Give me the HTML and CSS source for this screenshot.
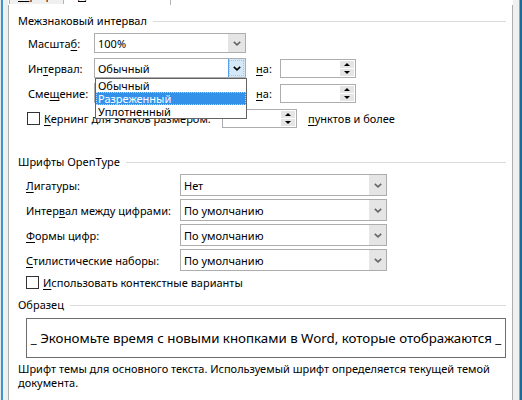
FILE: index.html
```html
<!DOCTYPE html>
<html lang="ru">
<head>
<meta charset="utf-8">
<link rel="stylesheet" href="styles.css">
</head>
<body>
<div class="dialog">
  <div class="tabs">
    <div class="tab"><span class="tab-text"><u>Ш</u>рифт</span></div>
    <div class="tab active"><span class="tab-text"><u>Д</u>ополнительно</span></div>
  </div>
  <div class="panel">
    <div class="group-title"><span>Межзнаковый интервал</span></div>
    <div class="rows">
      <div class="row">
        <span class="lbl lbl-a">Масшта<u>б</u>:</span>
        <div class="combo combo-a"><span class="val">100%</span><span class="btn"><svg width="8" height="5" viewBox="0 0 8 5"><path d="M0.8 0.8 L4 3.8 L7.2 0.8" fill="none" stroke="#666" stroke-width="1.6"/></svg></span></div>
      </div>
      <div class="row">
        <span class="lbl lbl-a">Ин<u>т</u>ервал:</span>
        <div class="combo combo-a open">
          <span class="val">Обычный</span>
          <span class="btn hot"><svg width="8" height="5" viewBox="0 0 8 5"><path d="M0.8 0.8 L4 3.8 L7.2 0.8" fill="none" stroke="#000" stroke-width="1.6"/></svg></span>
          <ul class="list">
            <li>Обычный</li>
            <li class="sel">Разреженный</li>
            <li>Уплотненный</li>
          </ul>
        </div>
        <span class="na"><u>н</u>а:</span>
        <div class="spin"><span class="field"></span><span class="arrows"><span class="arr"><i class="up"></i></span><span class="arr"><i class="dn"></i></span></span></div>
      </div>
      <div class="row">
        <span class="lbl lbl-a">Сме<u>щ</u>ение:</span>
        <div class="combo combo-a"><span class="val"></span><span class="btn"></span></div>
        <span class="na"><u>н</u>а:</span>
        <div class="spin"><span class="field"></span><span class="arrows"><span class="arr"><i class="up"></i></span><span class="arr"><i class="dn"></i></span></span></div>
      </div>
      <div class="row">
        <span class="check"></span>
        <span class="kern-lbl"><u>К</u>ернинг для знаков размером:</span>
        <div class="spin spin-k"><span class="field"></span><span class="arrows"><span class="arr"><i class="up"></i></span><span class="arr"><i class="dn"></i></span></span></div>
        <span class="pts"><u>п</u>унктов и более</span>
      </div>
    </div>

    <div class="group-title g2"><span>Шрифты OpenType</span></div>
    <div class="ot-rows">
      <div class="ot-row">
        <span class="lbl lbl-b"><u>Л</u>игатуры:</span>
        <div class="combo combo-b"><span class="val">Нет</span><span class="btn"><svg width="8" height="5" viewBox="0 0 8 5"><path d="M0.8 0.8 L4 3.8 L7.2 0.8" fill="none" stroke="#666" stroke-width="1.6"/></svg></span></div>
      </div>
      <div class="ot-row">
        <span class="lbl lbl-b">Интер<u>в</u>ал между цифрами:</span>
        <div class="combo combo-b"><span class="val">По умолчанию</span><span class="btn"><svg width="8" height="5" viewBox="0 0 8 5"><path d="M0.8 0.8 L4 3.8 L7.2 0.8" fill="none" stroke="#666" stroke-width="1.6"/></svg></span></div>
      </div>
      <div class="ot-row">
        <span class="lbl lbl-b"><u>Ф</u>ормы цифр:</span>
        <div class="combo combo-b"><span class="val">По умолчанию</span><span class="btn"><svg width="8" height="5" viewBox="0 0 8 5"><path d="M0.8 0.8 L4 3.8 L7.2 0.8" fill="none" stroke="#666" stroke-width="1.6"/></svg></span></div>
      </div>
      <div class="ot-row">
        <span class="lbl lbl-b"><u>С</u>тилистические наборы:</span>
        <div class="combo combo-b"><span class="val">По умолчанию</span><span class="btn"><svg width="8" height="5" viewBox="0 0 8 5"><path d="M0.8 0.8 L4 3.8 L7.2 0.8" fill="none" stroke="#666" stroke-width="1.6"/></svg></span></div>
      </div>
      <div class="ot-check">
        <span class="check"></span>
        <span class="ctx-lbl"><u>И</u>спользовать контекстные варианты</span>
      </div>
    </div>

    <div class="group-title g3"><span>Образец</span></div>
    <div class="sample">_ Экономьте время с новыми кнопками в Word, которые отображаются _</div>
    <p class="desc">Шрифт темы для основного текста. Используемый шрифт определяется текущей темой документа.</p>
  </div>
</div>
</body>
</html>
```

FILE: styles.css
```css
* { box-sizing: border-box; margin: 0; padding: 0; }
html, body { width: 522px; height: 400px; overflow: hidden; }
body {
  background: #f0f0f0;
  font-family: "Noto Sans", "Open Sans", sans-serif;
  font-size: 11px;
  color: #000;
}
u { text-decoration: underline; text-underline-offset: 2px; }

.dialog {
  height: 400px;
  padding: 0 9px 0 8px;
  display: flex;
  flex-direction: column;
  box-shadow: inset 1px 0 #e8e8e8, inset 3px 0 #3a96cf, inset -2px 0 #1c6a98, inset -3px 0 #6ab0dc;
}

.tabs {
  display: flex;
  height: 5px;
  background: #fff;
  position: relative;
  z-index: 2;
}
.tab {
  height: 4px;
  overflow: hidden;
  background: #f0f0f0;
  border-left: 1px solid #b4b4b4;
  border-right: 1px solid #b4b4b4;
  margin-left: 1px;
  width: 55px;
  padding-left: 8px;
}
.tab.active {
  height: 5px;
  background: #fff;
  border-left: none;
  margin-left: 0;
  width: 107px;
  padding-left: 14px;
}
.tab-text {
  display: block;
  line-height: 16px;
  margin-top: -13px;
  white-space: nowrap;
}

.panel {
  flex: 1;
  margin-top: -1px;
  background: #fff;
  border: 1px solid #adadad;
  border-bottom: none;
  padding: 0 6px 0 9px;
}

.group-title {
  display: flex;
  align-items: center;
  gap: 6px;
  height: 16px;
  line-height: 16px;
  margin-top: 8px;
  white-space: nowrap;
}
.group-title::after {
  content: "";
  flex: 1;
  height: 1px;
  background: #dcdcdc;
}
.g2 { margin-top: 26px; }
.g3 { margin-top: 7px; }

.rows { padding-left: 10px; margin-top: 4px; }
.row {
  display: flex;
  align-items: center;
  height: 20px;
  margin-bottom: 5px;
  white-space: nowrap;
}
.lbl { flex: none; }
.lbl-a { width: 66px; }
.lbl-b { width: 154px; }

.combo {
  position: relative;
  display: flex;
  flex: none;
  border: 1px solid #adadad;
  background: #fff;
}
.combo-a { width: 152px; height: 20px; }
.combo-b { width: 207px; height: 22px; }
.val {
  flex: 1;
  padding-left: 3px;
  display: flex;
  align-items: center;
}
.btn {
  width: 17px;
  background: #e5e5e5;
  display: flex;
  align-items: center;
  justify-content: center;
}
.btn.hot {
  background: #d5e8f8;
  border-left: 1px solid #569de5;
  outline: 1px dotted #9cc6ee;
  outline-offset: -2px;
}

.list {
  position: absolute;
  left: 0;
  top: 19px;
  width: 152px;
  list-style: none;
  background: #fff;
  border: 1px solid #646464;
  z-index: 5;
  padding: 0;
}
.list li {
  height: 13px;
  line-height: 13px;
  padding-left: 2px;
}
.list li.sel {
  background: #3391ea;
  color: #fff;
  outline: 1px dotted #b8d4f0;
  outline-offset: -1px;
}

.na { margin-left: 10px; width: 24px; flex: none; }
.spin {
  display: flex;
  flex: none;
  width: 76px;
  height: 19px;
  border: 1px solid #adadad;
  background: #fff;
}
.spin-k { width: 75px; }
.field { flex: 1; }
.arrows {
  width: 15px;
  display: flex;
  flex-direction: column;
  gap: 1px;
  padding: 1px 1px 1px 0;
  background: #fff;
}
.arr {
  flex: 1;
  background: #e5e5e5;
  display: flex;
  align-items: center;
  justify-content: center;
}
.arr i { width: 0; height: 0; border-left: 3px solid transparent; border-right: 3px solid transparent; }
.arr .up { border-bottom: 3px solid #000; }
.arr .dn { border-top: 3px solid #000; }

.check {
  width: 13px;
  height: 13px;
  border: 1px solid #333;
  background: #fff;
  flex: none;
  margin-left: -1px;
}
.kern-lbl { width: 178px; margin-left: 4px; flex: none; }
.pts { margin-left: 11px; }

.ot-rows { padding-left: 8px; margin-top: 4px; }
.ot-row {
  display: flex;
  align-items: center;
  height: 22px;
  margin-bottom: 3px;
  white-space: nowrap;
}
.ot-check {
  display: flex;
  align-items: center;
  height: 16px;
  margin-top: 3px;
  padding-left: 1px;
}
.ctx-lbl { margin-left: 4px; }

.sample {
  margin: 5px 0 0 8px;
  width: 480px;
  height: 40px;
  border: 1px solid #6d6d6d;
  display: flex;
  align-items: center;
  justify-content: center;
  font-size: 13.3px;
  white-space: nowrap;
  overflow: hidden;
}
.desc {
  margin-top: 4px;
  line-height: 14px;
  width: 487px;
}
```
